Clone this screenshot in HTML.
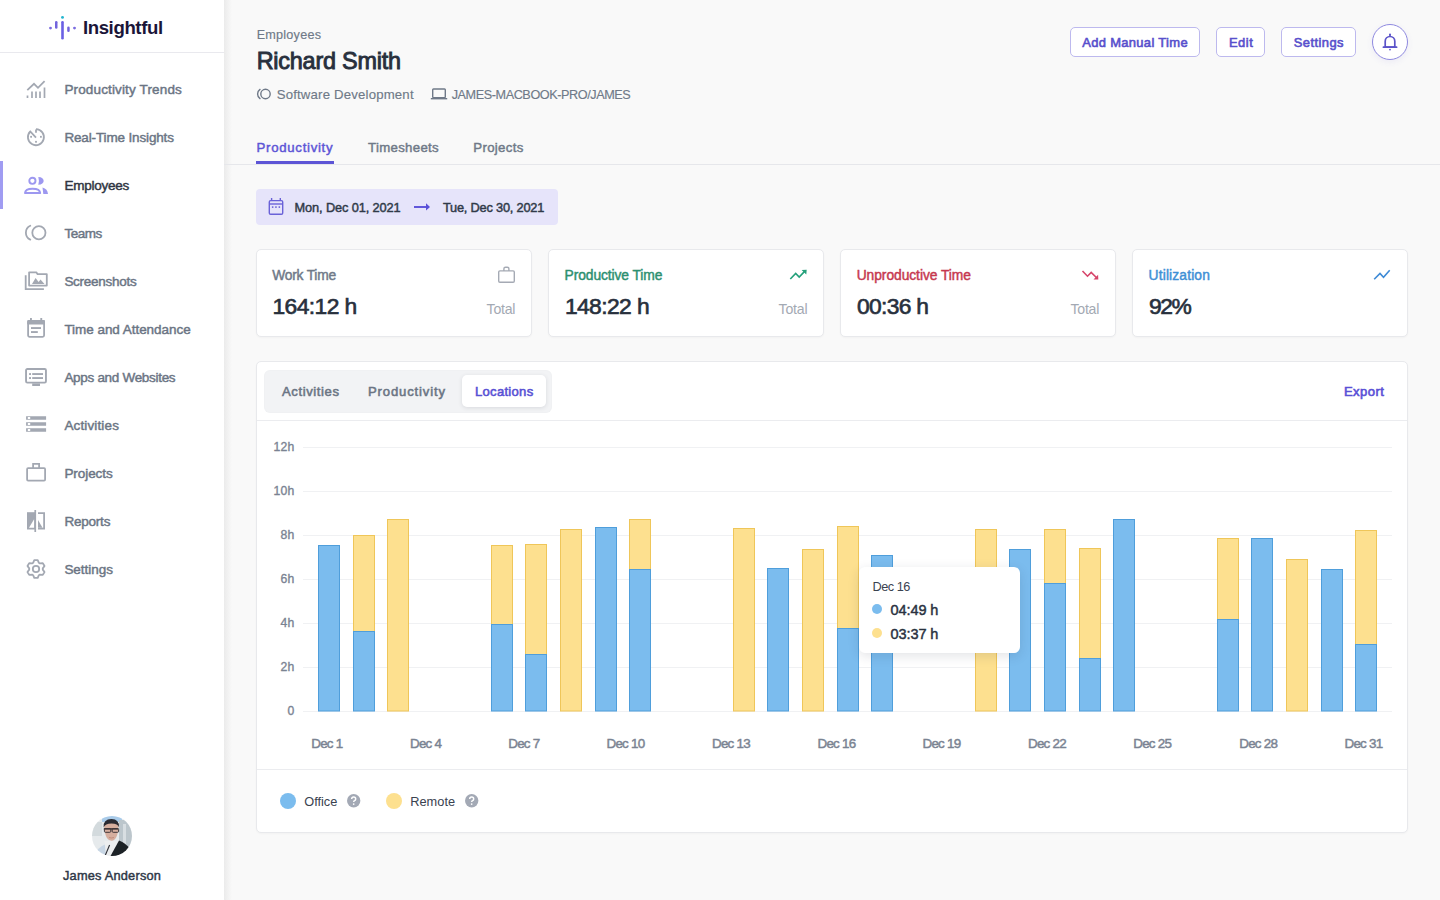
<!DOCTYPE html>
<html><head><meta charset="utf-8"><title>Insightful - Richard Smith</title>
<style>
*{margin:0;padding:0;box-sizing:border-box}
html,body{width:1440px;height:900px;overflow:hidden;background:#f9f9f9;font-family:"Liberation Sans",sans-serif}
.t{position:absolute;white-space:nowrap;line-height:1.117}
#side{position:absolute;left:0;top:0;width:224px;height:900px;background:#fff}
#sideshadow{position:absolute;left:224px;top:0;width:8px;height:900px;background:linear-gradient(to right,#ebebeb,rgba(249,249,249,0))}
.btn{position:absolute;top:27px;height:30px;border:1px solid #bdb9ee;border-radius:5px;background:#fff}
.card{position:absolute;background:#fff;border:1px solid #e8e9ec;border-radius:5px;box-shadow:0 1px 2px rgba(20,20,40,0.03)}
.o{fill:#7bbcee;stroke:#4f9edb;stroke-width:1}
.r{fill:#fde08f;stroke:#efc659;stroke-width:1}
</style></head>
<body>
<div id="side"></div><div id="sideshadow"></div><div style="position:absolute;left:0;top:52px;width:224px;height:1px;background:#e9e9ee"></div>
<svg style="position:absolute;left:44px;top:12px" width="36" height="32" viewBox="44 12 36 32">
<circle cx="50.5" cy="28.1" r="1.45" fill="#7a6be0"/>
<rect x="55" y="21.1" width="2.5" height="7.6" rx="1.25" fill="#7264dc"/>
<rect x="61.2" y="21" width="2.6" height="18.5" rx="1.3" fill="#6a60e4"/>
<circle cx="62.5" cy="17.4" r="1.45" fill="#22b5cf"/>
<rect x="67.2" y="26.4" width="2.5" height="5.6" rx="1.25" fill="#7264dc"/>
<circle cx="74.5" cy="28.1" r="1.45" fill="#7a6be0"/>
</svg>
<div class="t" style="left:82.90px;top:17.56px;font-size:18.60px;font-weight:700;color:#1a1538;letter-spacing:-0.380px;">Insightful</div>
<div style="position:absolute;left:24px;top:77px;width:24px;height:24px"><svg width="24" height="24" viewBox="0 0 24 24"><path d="M3.3 13.2 L10 6.8 L14 10.8 L20.6 4.2" fill="none" stroke="#a3a8b2" stroke-width="1.8"/><path d="M3.5 21 V18.5 M8 21 V14.5 M12 21 V14.5 M16 21 V14.5 M20.5 21 V10.5" stroke="#a3a8b2" stroke-width="1.7"/></svg></div>
<div class="t" style="left:64.40px;top:81.78px;font-size:13.50px;font-weight:400;color:#6b7584;letter-spacing:0.145px;-webkit-text-stroke:0.45px #6b7584;">Productivity Trends</div>
<div style="position:absolute;left:24px;top:125px;width:24px;height:24px"><svg width="24" height="24" viewBox="0 0 24 24"><path d="M12 4.2 A8 8 0 1 1 6.3 6.5 L12 12.6" fill="none" stroke="#a3a8b2" stroke-width="1.8"/><path d="M12 4.5 V7.7" stroke="#a3a8b2" stroke-width="1.8"/><rect x="6.2" y="10.9" width="1.8" height="1.8" fill="#a3a8b2"/><rect x="16" y="10.9" width="1.8" height="1.8" fill="#a3a8b2"/><rect x="11.1" y="15.9" width="1.8" height="1.8" fill="#a3a8b2"/></svg></div>
<div class="t" style="left:64.40px;top:129.78px;font-size:13.50px;font-weight:400;color:#6b7584;letter-spacing:-0.144px;-webkit-text-stroke:0.45px #6b7584;">Real-Time Insights</div>
<div style="position:absolute;left:0;top:161px;width:3px;height:48px;background:#a09cf2"></div>
<div style="position:absolute;left:24px;top:173px;width:24px;height:24px"><svg width="24" height="24" viewBox="0 0 24 24"><circle cx="8.4" cy="7.8" r="3.1" fill="none" stroke="#9d98f0" stroke-width="1.9"/><path d="M14.3 3.9 C21.5 3.9 21.5 11.7 14.3 11.7 Q15.6 7.8 14.3 3.9 Z" fill="#9d98f0"/><path d="M0.95 20 Q1.3 15.75 8.6 15.75 Q15.9 15.75 16.2 20 Z" fill="none" stroke="#9d98f0" stroke-width="1.9" stroke-linejoin="round"/><path d="M18.5 14.5 Q23.6 16 24 20.9 H19.3 Z" fill="#9d98f0"/></svg></div>
<div class="t" style="left:64.40px;top:177.78px;font-size:13.50px;font-weight:400;color:#2f3542;letter-spacing:-0.236px;-webkit-text-stroke:0.45px #2f3542;">Employees</div>
<div style="position:absolute;left:24px;top:221px;width:24px;height:24px"><svg width="24" height="24" viewBox="0 0 24 24"><circle cx="14.9" cy="11.7" r="6.6" fill="none" stroke="#a3a8b2" stroke-width="1.8"/><path d="M6.3 4.8 A7.6 7.6 0 0 0 6.3 18.6" fill="none" stroke="#a3a8b2" stroke-width="1.8" stroke-linecap="round"/></svg></div>
<div class="t" style="left:64.40px;top:225.78px;font-size:13.50px;font-weight:400;color:#6b7584;letter-spacing:-0.489px;-webkit-text-stroke:0.45px #6b7584;">Teams</div>
<div style="position:absolute;left:24px;top:269px;width:24px;height:24px"><svg width="24" height="24" viewBox="0 0 24 24"><path d="M5.1 3.3 H12.3 L13.6 5.2 H22.8 V16.6 H5.1 Z" fill="none" stroke="#a3a8b2" stroke-width="1.8" stroke-linejoin="round"/><path d="M1.7 6.3 V20.1 H19.9" fill="none" stroke="#a3a8b2" stroke-width="1.8"/><path d="M8 15 L11.6 9 L14.6 13 L16.5 10.6 L20.5 15 Z" fill="#a3a8b2"/></svg></div>
<div class="t" style="left:64.40px;top:273.78px;font-size:13.50px;font-weight:400;color:#6b7584;letter-spacing:-0.273px;-webkit-text-stroke:0.45px #6b7584;">Screenshots</div>
<div style="position:absolute;left:24px;top:317px;width:24px;height:24px"><svg width="24" height="24" viewBox="0 0 24 24"><rect x="4.1" y="4" width="16" height="15.8" rx="1.5" fill="none" stroke="#a3a8b2" stroke-width="1.8"/><rect x="3.2" y="3.1" width="17.8" height="4.4" rx="1" fill="#a3a8b2"/><rect x="6" y="1" width="1.9" height="2.6" fill="#a3a8b2"/><rect x="16.3" y="1" width="1.9" height="2.6" fill="#a3a8b2"/><rect x="7" y="10.1" width="10" height="1.9" fill="#a3a8b2"/><rect x="7" y="14.1" width="6.8" height="1.9" fill="#a3a8b2"/></svg></div>
<div class="t" style="left:64.40px;top:321.78px;font-size:13.50px;font-weight:400;color:#6b7584;letter-spacing:-0.045px;-webkit-text-stroke:0.45px #6b7584;">Time and Attendance</div>
<div style="position:absolute;left:24px;top:365px;width:24px;height:24px"><svg width="24" height="24" viewBox="0 0 24 24"><rect x="2.05" y="4.05" width="19.9" height="13.6" rx="1.3" fill="none" stroke="#a3a8b2" stroke-width="1.9"/><rect x="8.2" y="18.4" width="7.8" height="2.6" fill="#a3a8b2"/><rect x="5.1" y="8.1" width="1.9" height="1.9" fill="#a3a8b2"/><rect x="8.2" y="8.1" width="10.8" height="1.9" fill="#a3a8b2"/><rect x="5.1" y="12.1" width="1.9" height="1.9" fill="#a3a8b2"/><rect x="8.2" y="12.1" width="10.8" height="1.9" fill="#a3a8b2"/></svg></div>
<div class="t" style="left:64.40px;top:369.78px;font-size:13.50px;font-weight:400;color:#6b7584;letter-spacing:-0.304px;-webkit-text-stroke:0.45px #6b7584;">Apps and Websites</div>
<div style="position:absolute;left:24px;top:413px;width:24px;height:24px"><svg width="24" height="24" viewBox="0 0 24 24"><path d="M2.1 3.2 H22.1 V6.8 H2.1 Z M3.8 4.1 V5.9 H6.2 V4.1 Z M2.1 9.2 H22.1 V12.8 H2.1 Z M3.8 10.1 V11.9 H6.2 V10.1 Z M2.1 15.2 H22.1 V18.8 H2.1 Z M3.8 16.1 V17.9 H6.2 V16.1 Z" fill="#a3a8b2" fill-rule="evenodd"/></svg></div>
<div class="t" style="left:64.40px;top:417.78px;font-size:13.50px;font-weight:400;color:#6b7584;letter-spacing:0.138px;-webkit-text-stroke:0.45px #6b7584;">Activities</div>
<div style="position:absolute;left:24px;top:461px;width:24px;height:24px"><svg width="24" height="24" viewBox="0 0 24 24"><rect x="3.1" y="7.2" width="18" height="12.4" rx="1" fill="none" stroke="#a3a8b2" stroke-width="1.8"/><path d="M9.1 7.2 V2.9 H15.1 V7.2" fill="none" stroke="#a3a8b2" stroke-width="1.8"/></svg></div>
<div class="t" style="left:64.40px;top:465.78px;font-size:13.50px;font-weight:400;color:#6b7584;letter-spacing:-0.067px;-webkit-text-stroke:0.45px #6b7584;">Projects</div>
<div style="position:absolute;left:24px;top:509px;width:24px;height:24px"><svg width="24" height="24" viewBox="0 0 24 24"><path d="M3 3.2 H11 V20.5 H3 Z" fill="#a3a8b2"/><path d="M5 18.8 L10.2 10 V18.8 Z" fill="#fff"/><rect x="10.4" y="1" width="1.7" height="22" fill="#a3a8b2"/><path d="M14 4.1 H20.1 V19.6 H14" fill="none" stroke="#a3a8b2" stroke-width="1.8"/><path d="M14 11 L18.5 18.8 H14 Z" fill="#a3a8b2"/></svg></div>
<div class="t" style="left:64.40px;top:513.78px;font-size:13.50px;font-weight:400;color:#6b7584;letter-spacing:-0.214px;-webkit-text-stroke:0.45px #6b7584;">Reports</div>
<div style="position:absolute;left:24px;top:557px;width:24px;height:24px"><svg width="24" height="24" viewBox="0 0 24 24"><path d="M9.13 5.84 L10.28 3.17 L13.72 3.17 L14.87 5.84 L15.90 6.43 L18.79 6.10 L20.51 9.07 L18.77 11.41 L18.77 12.59 L20.51 14.93 L18.79 17.90 L15.90 17.57 L14.87 18.16 L13.72 20.83 L10.28 20.83 L9.13 18.16 L8.10 17.57 L5.21 17.90 L3.49 14.93 L5.23 12.59 L5.23 11.41 L3.49 9.07 L5.21 6.10 L8.10 6.43 Z" fill="none" stroke="#a3a8b2" stroke-width="1.8" stroke-linejoin="round"/><circle cx="12" cy="12" r="3.2" fill="none" stroke="#a3a8b2" stroke-width="1.8"/></svg></div>
<div class="t" style="left:64.40px;top:561.78px;font-size:13.50px;font-weight:400;color:#6b7584;letter-spacing:-0.038px;-webkit-text-stroke:0.45px #6b7584;">Settings</div>
<svg style="position:absolute;left:92px;top:816px" width="40" height="40" viewBox="0 0 40 40">
<defs><clipPath id="av"><circle cx="20" cy="20" r="20"/></clipPath><filter id="bl" x="-10%" y="-10%" width="120%" height="120%"><feGaussianBlur stdDeviation="0.45"/></filter></defs>
<g clip-path="url(#av)"><g filter="url(#bl)">
<rect x="-2" y="-2" width="44" height="44" fill="#e6eaec"/>
<rect x="10" y="-2" width="20" height="8" fill="#a9cbe9"/>
<rect x="-2" y="6" width="12" height="14" fill="#d3dadd"/>
<rect x="27" y="4" width="14" height="30" fill="#bcc6cc"/>
<rect x="31" y="8" width="3" height="24" fill="#d8dee2"/>
<path d="M3 40 Q5 31 14 28 L16 40 Z" fill="#c8d6e4"/>
<path d="M12.5 25 L25.5 25 L23 40 L14 40 Z" fill="#eceeef"/>
<path d="M18.5 40 L27 24.5 Q34 27 38 33 L38 42 L18 42 Z" fill="#1e2026"/>
<path d="M17.6 29 L13 40" stroke="#2c2f36" stroke-width="1.1"/>
<path d="M12.2 7 Q12 24 19.5 24.8 Q26.6 24.4 26.4 7 Z" fill="#d6ae9e"/>
<path d="M11.6 11.5 Q11 3 19.5 3 Q27.5 3 27 11.5 Q26 7.8 19.5 7.6 Q13.2 7.8 11.6 11.5 Z" fill="#2a2a30"/>
<path d="M11.8 12.9 H26.4" stroke="#3a3034" stroke-width="1.5"/>
<rect x="12.4" y="12.5" width="6.4" height="3.8" rx="1" fill="none" stroke="#3e3538" stroke-width="1"/>
<rect x="20.2" y="12.5" width="6.4" height="3.8" rx="1" fill="none" stroke="#3e3538" stroke-width="1"/>
<path d="M17 21.5 Q19.5 22.5 22 21.5" stroke="#c08878" stroke-width="0.9" fill="none"/>
</g></g></svg>
<div class="t" style="left:63.00px;top:869.02px;font-size:12.79px;font-weight:400;color:#2f3847;letter-spacing:0.208px;-webkit-text-stroke:0.45px #2f3847;">James Anderson</div>
<div class="t" style="left:256.70px;top:28.26px;font-size:12.65px;font-weight:400;color:#6f7988;letter-spacing:0.217px;-webkit-text-stroke:0.15px #6f7988;">Employees</div>
<div class="t" style="left:256.70px;top:47.72px;font-size:23.40px;font-weight:400;color:#28303d;letter-spacing:-0.221px;-webkit-text-stroke:0.9px #28303d;">Richard Smith</div>
<svg style="position:absolute;left:256px;top:86px" width="16" height="16" viewBox="0 0 16 16"><circle cx="9.5" cy="8" r="4.7" fill="none" stroke="#6f7988" stroke-width="1.4"/><path d="M4 3.4 A5.6 5.6 0 0 0 4 12.6" fill="none" stroke="#6f7988" stroke-width="1.4" stroke-linecap="round"/></svg>
<div class="t" style="left:276.70px;top:87.55px;font-size:13.20px;font-weight:400;color:#6f7988;letter-spacing:0.182px;-webkit-text-stroke:0.15px #6f7988;">Software Development</div>
<svg style="position:absolute;left:430px;top:86px" width="18" height="16" viewBox="0 0 18 16"><rect x="2.7" y="3" width="12.6" height="8.6" rx="0.8" fill="none" stroke="#6f7988" stroke-width="1.4"/><rect x="0.8" y="12" width="16.4" height="1.4" fill="#6f7988"/></svg>
<div class="t" style="left:451.70px;top:88.06px;font-size:12.65px;font-weight:400;color:#6f7988;letter-spacing:-0.418px;-webkit-text-stroke:0.15px #6f7988;">JAMES-MACBOOK-PRO/JAMES</div>
<div class="t" style="left:256.60px;top:140.73px;font-size:13.23px;font-weight:400;color:#5d55d6;letter-spacing:0.696px;-webkit-text-stroke:0.45px #5d55d6;">Productivity</div>
<div class="t" style="left:368.00px;top:140.73px;font-size:13.23px;font-weight:400;color:#6f7988;letter-spacing:0.313px;-webkit-text-stroke:0.45px #6f7988;">Timesheets</div>
<div class="t" style="left:473.30px;top:140.73px;font-size:13.23px;font-weight:400;color:#6f7988;letter-spacing:0.317px;-webkit-text-stroke:0.45px #6f7988;">Projects</div>
<div style="position:absolute;left:224px;top:164px;width:1216px;height:1px;background:#e6e7eb"></div>
<div style="position:absolute;left:256px;top:161px;width:78px;height:3px;background:#5d55d6"></div>
<div class="btn" style="left:1070px;width:130px"></div>
<div class="t" style="left:1082.20px;top:35.79px;font-size:12.94px;font-weight:400;color:#5850cc;letter-spacing:0.338px;-webkit-text-stroke:0.6px #5850cc;">Add Manual Time</div>
<div class="btn" style="left:1216px;width:49px"></div>
<div class="t" style="left:1228.90px;top:35.79px;font-size:12.94px;font-weight:400;color:#5850cc;letter-spacing:0.539px;-webkit-text-stroke:0.6px #5850cc;">Edit</div>
<div class="btn" style="left:1281px;width:75px"></div>
<div class="t" style="left:1293.80px;top:35.79px;font-size:12.94px;font-weight:400;color:#5850cc;letter-spacing:0.424px;-webkit-text-stroke:0.6px #5850cc;">Settings</div>
<div style="position:absolute;left:1372px;top:24px;width:36px;height:36px;border:1px solid #8f8ae0;border-radius:50%;background:#fff;box-shadow:0 2px 6px rgba(90,80,200,0.08)"></div>
<svg style="position:absolute;left:1380px;top:32px" width="20" height="20" viewBox="0 0 20 20"><path d="M5.2 15 V9.3 A4.8 4.8 0 0 1 14.8 9.3 V15 Z" fill="none" stroke="#5b53c9" stroke-width="1.7" stroke-linejoin="round"/><path d="M3.4 15.2 H16.6" stroke="#5b53c9" stroke-width="1.7" stroke-linecap="round"/><circle cx="10" cy="2.6" r="1" fill="#5b53c9"/><rect x="9.2" y="2.5" width="1.6" height="2.4" fill="#5b53c9"/><circle cx="10" cy="17.6" r="0.9" fill="#5b53c9"/></svg>
<div style="position:absolute;left:256px;top:189px;width:302px;height:36px;background:#e6e4fa;border-radius:4px"></div>
<svg style="position:absolute;left:262px;top:192px" width="30" height="30" viewBox="0 0 30 30"><rect x="7.3" y="8.6" width="13.4" height="13.7" rx="1.3" fill="none" stroke="#6a62d8" stroke-width="1.4"/><path d="M7.3 12 H20.7" stroke="#6a62d8" stroke-width="1.4"/><path d="M9.6 6 V8.6 M18.3 6 V8.6" stroke="#6a62d8" stroke-width="1.4"/><rect x="9.9" y="14.3" width="1.5" height="1.6" fill="#6a62d8"/><rect x="13.2" y="14.3" width="1.5" height="1.6" fill="#6a62d8"/><rect x="16.6" y="14.3" width="1.5" height="1.6" fill="#6a62d8"/></svg>
<div class="t" style="left:294.60px;top:200.92px;font-size:12.79px;font-weight:400;color:#303a49;letter-spacing:-0.118px;-webkit-text-stroke:0.45px #303a49;">Mon, Dec 01, 2021</div>
<svg style="position:absolute;left:408px;top:197px" width="30" height="20" viewBox="0 0 30 20"><path d="M6 10 H19" stroke="#5a50d8" stroke-width="1.9"/><path d="M18 6.3 L22 10 L18 13.6 Z" fill="#5a50d8"/></svg>
<div class="t" style="left:442.90px;top:200.92px;font-size:12.79px;font-weight:400;color:#303a49;letter-spacing:-0.203px;-webkit-text-stroke:0.45px #303a49;">Tue, Dec 30, 2021</div>
<div class="card" style="left:256px;top:249px;width:276px;height:88px"></div>
<div class="t" style="left:272.20px;top:267.60px;font-size:13.81px;font-weight:400;color:#6f7988;letter-spacing:-0.216px;-webkit-text-stroke:0.45px #6f7988;">Work Time</div>
<div class="t" style="left:272.50px;top:294.25px;font-size:22.82px;font-weight:400;color:#28303d;letter-spacing:-0.575px;-webkit-text-stroke:0.65px #28303d;">164:12 h</div>
<div class="t" style="left:486.60px;top:302.14px;font-size:14.10px;font-weight:400;color:#a3a9b3;letter-spacing:-0.246px;">Total</div>
<svg style="position:absolute;left:490px;top:260px" width="30" height="30" viewBox="0 0 30 30"><rect x="8.7" y="10.9" width="15.6" height="11.4" rx="1.2" fill="none" stroke="#a5aab4" stroke-width="1.4"/><path d="M13.9 10.9 V8.8 Q13.9 7.2 15.5 7.2 H17.3 Q18.9 7.2 18.9 8.8 V10.9" fill="none" stroke="#a5aab4" stroke-width="1.4"/></svg>
<div class="card" style="left:548px;top:249px;width:276px;height:88px"></div>
<div class="t" style="left:564.60px;top:267.60px;font-size:13.81px;font-weight:400;color:#2c8f70;letter-spacing:-0.086px;-webkit-text-stroke:0.45px #2c8f70;">Productive Time</div>
<div class="t" style="left:564.90px;top:294.25px;font-size:22.82px;font-weight:400;color:#28303d;letter-spacing:-0.589px;-webkit-text-stroke:0.65px #28303d;">148:22 h</div>
<div class="t" style="left:778.50px;top:302.14px;font-size:14.10px;font-weight:400;color:#a3a9b3;letter-spacing:-0.171px;">Total</div>
<svg style="position:absolute;left:780px;top:260px" width="30" height="30" viewBox="0 0 30 30"><path d="M10.3 19 L15.7 13.4 L19.2 17 L24.6 11.4" fill="none" stroke="#24a07a" stroke-width="1.6" stroke-linejoin="miter"/><path d="M21.6 10 L26.7 9.7 L26.3 14.6 Z" fill="#24a07a"/></svg>
<div class="card" style="left:840px;top:249px;width:276px;height:88px"></div>
<div class="t" style="left:856.70px;top:267.60px;font-size:13.81px;font-weight:400;color:#c6384f;letter-spacing:-0.052px;-webkit-text-stroke:0.45px #c6384f;">Unproductive Time</div>
<div class="t" style="left:857.00px;top:294.25px;font-size:22.82px;font-weight:400;color:#28303d;letter-spacing:-0.693px;-webkit-text-stroke:0.65px #28303d;">00:36 h</div>
<div class="t" style="left:1070.50px;top:302.14px;font-size:14.10px;font-weight:400;color:#a3a9b3;letter-spacing:-0.246px;">Total</div>
<svg style="position:absolute;left:1075px;top:260px" width="30" height="30" viewBox="0 0 30 30"><path d="M7.5 11 L12.5 16.2 L16.2 12.4 L21.6 17.8" fill="none" stroke="#d6456a" stroke-width="1.6"/><path d="M18.5 19.6 L23.3 19.6 L23.1 14.8 Z" fill="#d6456a"/></svg>
<div class="card" style="left:1132px;top:249px;width:276px;height:88px"></div>
<div class="t" style="left:1148.60px;top:267.60px;font-size:13.81px;font-weight:400;color:#3e8fd5;letter-spacing:0.144px;-webkit-text-stroke:0.45px #3e8fd5;">Utilization</div>
<div class="t" style="left:1148.90px;top:294.25px;font-size:22.82px;font-weight:400;color:#28303d;letter-spacing:-1.398px;-webkit-text-stroke:0.65px #28303d;">92%</div>
<svg style="position:absolute;left:1366px;top:260px" width="30" height="30" viewBox="0 0 30 30"><path d="M8.2 19.3 L14 13.5 L17.5 17.2 L23.7 10.3" fill="none" stroke="#3d8ad6" stroke-width="1.6"/></svg>
<div class="card" style="left:256px;top:361px;width:1152px;height:472px"></div>
<div style="position:absolute;left:257px;top:420px;width:1150px;height:1px;background:#ebecef"></div>
<div style="position:absolute;left:257px;top:769px;width:1150px;height:1px;background:#ebecef"></div>
<div style="position:absolute;left:264px;top:370px;width:288px;height:43px;background:#f2f3f5;border-radius:6px;box-shadow:inset 0 0 2px rgba(0,0,0,0.03)"></div>
<div style="position:absolute;left:462px;top:375px;width:84px;height:32px;background:#fff;border-radius:5px;box-shadow:0 1px 4px rgba(30,40,60,0.12)"></div>
<div class="t" style="left:282.00px;top:384.76px;font-size:13.08px;font-weight:400;color:#6b7584;letter-spacing:0.599px;-webkit-text-stroke:0.55px #6b7584;">Activities</div>
<div class="t" style="left:368.00px;top:384.76px;font-size:13.08px;font-weight:400;color:#6b7584;letter-spacing:0.855px;-webkit-text-stroke:0.55px #6b7584;">Productivity</div>
<div class="t" style="left:475.00px;top:384.76px;font-size:13.08px;font-weight:400;color:#5850d4;letter-spacing:0.276px;-webkit-text-stroke:0.55px #5850d4;">Locations</div>
<div class="t" style="left:1343.90px;top:384.86px;font-size:13.08px;font-weight:400;color:#5a50d6;letter-spacing:0.459px;-webkit-text-stroke:0.6px #5a50d6;">Export</div>
<svg style="position:absolute;left:0;top:0" width="1440" height="900" viewBox="0 0 1440 900">
<g stroke="#f0f1f3" stroke-width="1"><line x1="303" x2="1392" y1="447.5" y2="447.5"/>
<line x1="303" x2="1392" y1="491.5" y2="491.5"/>
<line x1="303" x2="1392" y1="535.5" y2="535.5"/>
<line x1="303" x2="1392" y1="579.5" y2="579.5"/>
<line x1="303" x2="1392" y1="623.5" y2="623.5"/>
<line x1="303" x2="1392" y1="667.5" y2="667.5"/>
<line x1="303" x2="1392" y1="711.5" y2="711.5"/></g>
<g><rect x="318.5" y="545.5" width="21" height="165.5" class="o"/>
<rect x="353.5" y="535.5" width="21" height="96" class="r"/>
<rect x="353.5" y="631.5" width="21" height="79.5" class="o"/>
<rect x="387.5" y="519.5" width="21" height="191.5" class="r"/>
<rect x="491.5" y="545.5" width="21" height="79" class="r"/>
<rect x="491.5" y="624.5" width="21" height="86.5" class="o"/>
<rect x="525.5" y="544.5" width="21" height="110" class="r"/>
<rect x="525.5" y="654.5" width="21" height="56.5" class="o"/>
<rect x="560.5" y="529.5" width="21" height="181.5" class="r"/>
<rect x="595.5" y="527.5" width="21" height="183.5" class="o"/>
<rect x="629.5" y="519.5" width="21" height="50" class="r"/>
<rect x="629.5" y="569.5" width="21" height="141.5" class="o"/>
<rect x="733.5" y="528.5" width="21" height="182.5" class="r"/>
<rect x="767.5" y="568.5" width="21" height="142.5" class="o"/>
<rect x="802.5" y="549.5" width="21" height="161.5" class="r"/>
<rect x="837.5" y="526.5" width="21" height="102" class="r"/>
<rect x="837.5" y="628.5" width="21" height="82.5" class="o"/>
<rect x="871.5" y="555.5" width="21" height="155.5" class="o"/>
<rect x="975.5" y="529.5" width="21" height="181.5" class="r"/>
<rect x="1009.5" y="549.5" width="21" height="161.5" class="o"/>
<rect x="1044.5" y="529.5" width="21" height="54" class="r"/>
<rect x="1044.5" y="583.5" width="21" height="127.5" class="o"/>
<rect x="1079.5" y="548.5" width="21" height="110" class="r"/>
<rect x="1079.5" y="658.5" width="21" height="52.5" class="o"/>
<rect x="1113.5" y="519.5" width="21" height="191.5" class="o"/>
<rect x="1217.5" y="538.5" width="21" height="81" class="r"/>
<rect x="1217.5" y="619.5" width="21" height="91.5" class="o"/>
<rect x="1251.5" y="538.5" width="21" height="172.5" class="o"/>
<rect x="1286.5" y="559.5" width="21" height="151.5" class="r"/>
<rect x="1321.5" y="569.5" width="21" height="141.5" class="o"/>
<rect x="1355.5" y="530.5" width="21" height="114" class="r"/>
<rect x="1355.5" y="644.5" width="21" height="66.5" class="o"/></g>
</svg>
<div class="t" style="left:273.45px;top:441.46px;font-size:12.20px;font-weight:400;color:#7a8392;letter-spacing:0.305px;-webkit-text-stroke:0.35px #7a8392;">12h</div>
<div class="t" style="left:273.45px;top:485.46px;font-size:12.20px;font-weight:400;color:#7a8392;letter-spacing:0.305px;-webkit-text-stroke:0.35px #7a8392;">10h</div>
<div class="t" style="left:280.42px;top:529.46px;font-size:12.20px;font-weight:400;color:#7a8392;letter-spacing:0.407px;-webkit-text-stroke:0.35px #7a8392;">8h</div>
<div class="t" style="left:280.42px;top:573.46px;font-size:12.20px;font-weight:400;color:#7a8392;letter-spacing:0.407px;-webkit-text-stroke:0.35px #7a8392;">6h</div>
<div class="t" style="left:280.42px;top:617.46px;font-size:12.20px;font-weight:400;color:#7a8392;letter-spacing:0.407px;-webkit-text-stroke:0.35px #7a8392;">4h</div>
<div class="t" style="left:280.42px;top:661.46px;font-size:12.20px;font-weight:400;color:#7a8392;letter-spacing:0.407px;-webkit-text-stroke:0.35px #7a8392;">2h</div>
<div class="t" style="left:287.43px;top:705.46px;font-size:12.20px;font-weight:400;color:#7a8392;letter-spacing:0.000px;-webkit-text-stroke:0.35px #7a8392;">0</div>
<div class="t" style="left:311.25px;top:736.67px;font-size:13.40px;font-weight:400;color:#7a8392;letter-spacing:-0.763px;-webkit-text-stroke:0.45px #7a8392;">Dec 1</div>
<div class="t" style="left:410.00px;top:736.67px;font-size:13.40px;font-weight:400;color:#7a8392;letter-spacing:-0.763px;-webkit-text-stroke:0.45px #7a8392;">Dec 4</div>
<div class="t" style="left:508.25px;top:736.67px;font-size:13.40px;font-weight:400;color:#7a8392;letter-spacing:-0.763px;-webkit-text-stroke:0.45px #7a8392;">Dec 7</div>
<div class="t" style="left:606.50px;top:736.67px;font-size:13.40px;font-weight:400;color:#7a8392;letter-spacing:-0.762px;-webkit-text-stroke:0.45px #7a8392;">Dec 10</div>
<div class="t" style="left:712.00px;top:736.67px;font-size:13.40px;font-weight:400;color:#7a8392;letter-spacing:-0.762px;-webkit-text-stroke:0.45px #7a8392;">Dec 13</div>
<div class="t" style="left:817.50px;top:736.67px;font-size:13.40px;font-weight:400;color:#7a8392;letter-spacing:-0.762px;-webkit-text-stroke:0.45px #7a8392;">Dec 16</div>
<div class="t" style="left:922.50px;top:736.67px;font-size:13.40px;font-weight:400;color:#7a8392;letter-spacing:-0.762px;-webkit-text-stroke:0.45px #7a8392;">Dec 19</div>
<div class="t" style="left:1028.00px;top:736.67px;font-size:13.40px;font-weight:400;color:#7a8392;letter-spacing:-0.762px;-webkit-text-stroke:0.45px #7a8392;">Dec 22</div>
<div class="t" style="left:1133.25px;top:736.67px;font-size:13.40px;font-weight:400;color:#7a8392;letter-spacing:-0.762px;-webkit-text-stroke:0.45px #7a8392;">Dec 25</div>
<div class="t" style="left:1239.25px;top:736.67px;font-size:13.40px;font-weight:400;color:#7a8392;letter-spacing:-0.762px;-webkit-text-stroke:0.45px #7a8392;">Dec 28</div>
<div class="t" style="left:1344.50px;top:736.67px;font-size:13.40px;font-weight:400;color:#7a8392;letter-spacing:-0.762px;-webkit-text-stroke:0.45px #7a8392;">Dec 31</div>
<div style="position:absolute;left:859px;top:567px;width:161px;height:86px;background:#fff;border-radius:6px;box-shadow:0 3px 12px rgba(30,40,60,0.13)"></div>
<div class="t" style="left:872.50px;top:580.29px;font-size:12.72px;font-weight:400;color:#3a4250;letter-spacing:-0.477px;">Dec 16</div>
<div style="position:absolute;left:872px;top:604px;width:10px;height:10px;border-radius:50%;background:#7bbcee"></div>
<div style="position:absolute;left:872px;top:628px;width:10px;height:10px;border-radius:50%;background:#fde08f"></div>
<div class="t" style="left:890.60px;top:602.40px;font-size:14.53px;font-weight:400;color:#2a323f;letter-spacing:-0.102px;-webkit-text-stroke:0.45px #2a323f;">04:49 h</div>
<div class="t" style="left:890.60px;top:626.15px;font-size:14.53px;font-weight:400;color:#2a323f;letter-spacing:-0.102px;-webkit-text-stroke:0.45px #2a323f;">03:37 h</div>
<div style="position:absolute;left:280px;top:793px;width:16px;height:16px;border-radius:50%;background:#7bbcee"></div>
<div class="t" style="left:304.30px;top:795.02px;font-size:12.79px;font-weight:400;color:#3a4250;letter-spacing:-0.038px;">Office</div>
<div style="position:absolute;left:386px;top:793px;width:16px;height:16px;border-radius:50%;background:#fde08f"></div>
<div class="t" style="left:410.20px;top:795.02px;font-size:12.79px;font-weight:400;color:#3a4250;letter-spacing:0.040px;">Remote</div>
<svg style="position:absolute;left:347.3px;top:794.3px" width="13.4" height="13.4" viewBox="0 0 14 14"><circle cx="7" cy="7" r="7" fill="#a3a9b5"/><path d="M4.9 5.3 Q4.9 3.2 7 3.2 Q9.1 3.2 9.1 5.1 Q9.1 6.3 7.9 6.9 Q7 7.3 7 8.4" fill="none" stroke="#fff" stroke-width="1.5"/><circle cx="7" cy="10.5" r="0.9" fill="#fff"/></svg>
<svg style="position:absolute;left:465.2px;top:794.3px" width="13.4" height="13.4" viewBox="0 0 14 14"><circle cx="7" cy="7" r="7" fill="#a3a9b5"/><path d="M4.9 5.3 Q4.9 3.2 7 3.2 Q9.1 3.2 9.1 5.1 Q9.1 6.3 7.9 6.9 Q7 7.3 7 8.4" fill="none" stroke="#fff" stroke-width="1.5"/><circle cx="7" cy="10.5" r="0.9" fill="#fff"/></svg>
</body></html>
